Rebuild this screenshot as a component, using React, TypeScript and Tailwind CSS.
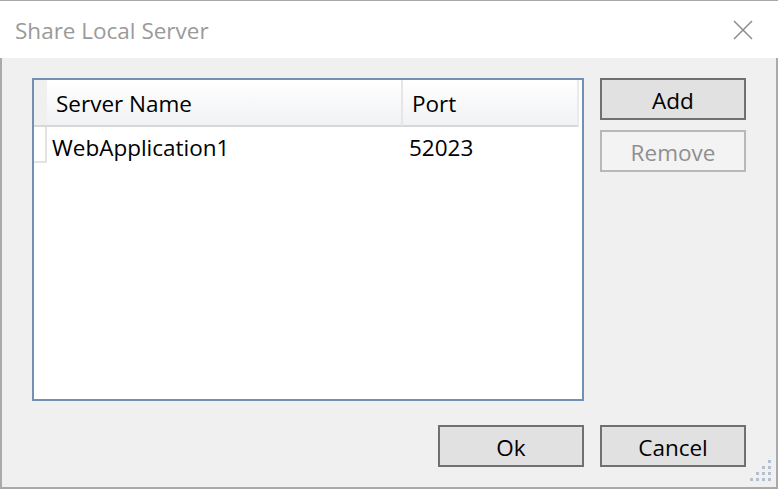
import React from "react";

const rows = [{ name: "WebApplication1", port: "52023" }];

const ResizeGrip: React.FC = () => {
  const dots: [number, number][] = [];
  for (let r = 0; r < 4; r++) {
    for (let c = 3 - r; c < 4; c++) dots.push([c * 6, r * 6]);
  }
  return (
    <svg width="22" height="22" className="absolute right-[4px] bottom-[5px]">
      {dots.map(([x, y]) => (
        <rect key={`${x}-${y}`} x={x} y={y} width="3" height="3" fill="#b4c0d0" />
      ))}
    </svg>
  );
};

const Btn: React.FC<{ label: string; disabled?: boolean }> = ({ label, disabled }) => (
  <button
    className={
      disabled
        ? "h-[42px] w-[146px] border-2 border-[#b8b8b8] bg-[#f3f3f3] pt-[4px] text-[22.5px] leading-none text-[#8f8f8f]"
        : "h-[42px] w-[146px] border-2 border-[#707070] bg-[#e1e1e1] pt-[4px] text-[22.5px] leading-none text-black"
    }
  >
    {label}
  </button>
);

export default function App() {
  return (
    <div
      className="flex h-[489px] w-[778px] flex-col border-t border-[#aaaaaa]"
      style={{ fontFamily: '"Open Sans", "Noto Sans", sans-serif' }}
    >
      <div className="flex h-[57px] items-center justify-between bg-white pl-[15px] pr-[25px]">
        <span className="pt-[3px] text-[22.5px] leading-none text-[#9a9a9a]">Share Local Server</span>
        <svg width="20" height="20" viewBox="0 0 20 20">
          <path d="M1 1 L19 19 M19 1 L1 19" stroke="#8c8c8c" strokeWidth="1.5" />
        </svg>
      </div>
      <div className="relative flex flex-1 flex-col border-b-2 border-l-2 border-r-2 border-b-[#aaaaaa] border-l-[#aaaaaa] border-r-[#aaaaaa] bg-[#f0f0f0] pl-[30px] pr-[30px] pt-[20px]">
        <div className="flex gap-[16px]">
          <div className="h-[323px] w-[552px] border-2 border-[#7090b5] bg-white">
            <div className="grid grid-cols-[13px_356px_176px] text-[22.5px] leading-none">
              <div className="h-[47px] border-b-2 border-[#d7d7d7] bg-[#f0f0f0]" />
              <div className="flex h-[47px] items-center border-b-2 border-r-2 border-[#d7d7d7] border-r-[#e6e6e6] bg-gradient-to-b from-white to-[#f1f2f4] pl-[9px] pt-[4px]">
                Server Name
              </div>
              <div className="flex h-[47px] items-center border-b-2 border-r-2 border-[#d7d7d7] border-r-[#ebebeb] bg-gradient-to-b from-white to-[#f1f2f4] pl-[9px] pt-[4px]">
                Port
              </div>
              {rows.map((r) => (
                <React.Fragment key={r.name}>
                  <div className="h-[36px] border-b-2 border-r-2 border-[#e3e3e3] bg-white" />
                  <div className="flex h-[36px] items-center pl-[5px] pt-[6px]">{r.name}</div>
                  <div className="flex h-[36px] items-center pl-[6px] pt-[6px]">{r.port}</div>
                </React.Fragment>
              ))}
            </div>
          </div>
          <div className="flex flex-col gap-[10px]">
            <Btn label="Add" />
            <Btn label="Remove" disabled />
          </div>
        </div>
        <div className="mt-[24px] flex justify-end gap-[16px]">
          <Btn label="Ok" />
          <Btn label="Cancel" />
        </div>
        <ResizeGrip />
      </div>
    </div>
  );
}
